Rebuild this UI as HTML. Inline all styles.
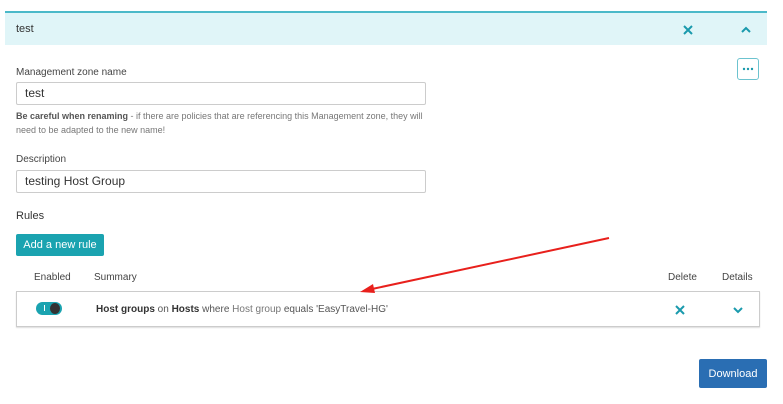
<!DOCTYPE html><html><head><style>
body{margin:0;width:783px;height:404px;background:#fff;font-family:"Liberation Sans",sans-serif;position:relative;overflow:hidden;color:#444}
.a{position:absolute}
.inp{position:absolute;left:16px;width:400px;height:21px;border:1px solid #ccc;border-radius:2px;font-size:12px;line-height:21px;padding-left:8px;color:#333}
.lbl{font-size:10px;color:#444}
</style></head><body>
<div class="a" style="left:5px;top:11px;width:762px;height:34px;background:#e0f5f8;border-top:2px solid #4bb9c9;box-sizing:border-box"></div>
<div class="a" style="left:16px;top:22px;font-size:11px;line-height:14px;color:#333">test</div>
<svg class="a" style="left:682px;top:24px" width="12" height="12"><path d="M2 2L10 10M10 2L2 10" stroke="#1a9aad" stroke-width="2"/></svg>
<svg class="a" style="left:740px;top:25px" width="12" height="10"><path d="M2 7L6 3L10 7" stroke="#1a9aad" stroke-width="2" fill="none"/></svg>
<div class="a" style="left:737px;top:58px;width:20px;height:20px;border:1px solid #6cc3cf;border-radius:3px"></div>
<svg class="a" style="left:738px;top:59px" width="20" height="20"><circle cx="6" cy="10" r="1.2" fill="#1a9aad"/><circle cx="10" cy="10" r="1.2" fill="#1a9aad"/><circle cx="14" cy="10" r="1.2" fill="#1a9aad"/></svg>
<div class="a lbl" style="left:16px;top:67px">Management zone name</div>
<div class="inp" style="top:82px">test</div>
<div class="a" style="left:16px;top:109px;font-size:9px;line-height:14px;color:#777;width:420px"><b style="color:#555">Be careful when renaming</b> - if there are policies that are referencing this Management zone, they will need to be adapted to the new name!</div>
<div class="a lbl" style="left:16px;top:154px">Description</div>
<div class="inp" style="top:170px">testing Host Group</div>
<div class="a" style="left:16px;top:210px;font-size:11px;color:#333">Rules</div>
<div class="a" style="left:16px;top:234px;width:88px;height:22px;background:#1aa3b0;border-radius:2px;color:#fff;font-size:11px;line-height:22px;text-align:center">Add a new rule</div>
<div class="a lbl" style="left:34px;top:272px">Enabled</div>
<div class="a lbl" style="left:94px;top:272px">Summary</div>
<div class="a lbl" style="left:668px;top:272px">Delete</div>
<div class="a lbl" style="left:722px;top:272px">Details</div>
<div class="a" style="left:16px;top:291px;width:744px;height:36px;border:1px solid #ccc;box-sizing:border-box;box-shadow:0 1px 1px #ddd"></div>
<div class="a" style="left:36px;top:302px;width:26px;height:13px;background:#1aa3b0;border-radius:7px"></div>
<div class="a" style="left:50px;top:303px;width:10px;height:11px;background:#333;border-radius:50%"></div>
<div class="a" style="left:44px;top:305px;width:1px;height:6px;background:#fff"></div>
<div class="a" style="left:96px;top:303px;font-size:10px;line-height:14px;color:#555"><b style="color:#333">Host groups</b> on <b style="color:#333">Hosts</b> where <span style="color:#777">Host group</span> equals 'EasyTravel-HG'</div>
<svg class="a" style="left:674px;top:304px" width="12" height="12"><path d="M2 2L10 10M10 2L2 10" stroke="#1a9aad" stroke-width="2"/></svg>
<svg class="a" style="left:732px;top:305px" width="12" height="10"><path d="M2 3L6 7L10 3" stroke="#1a9aad" stroke-width="2" fill="none"/></svg>
<div class="a" style="left:699px;top:359px;width:68px;height:29px;background:#2a6eb3;border-radius:2px;color:#fff;font-size:11px;line-height:31px;text-align:center">Download</div>
<svg class="a" style="left:0;top:0" width="783" height="404"><line x1="609" y1="238" x2="372" y2="289" stroke="#e8201c" stroke-width="2"/><path d="M360 292L373 284L375 293Z" fill="#e8201c"/></svg>
</body></html>
